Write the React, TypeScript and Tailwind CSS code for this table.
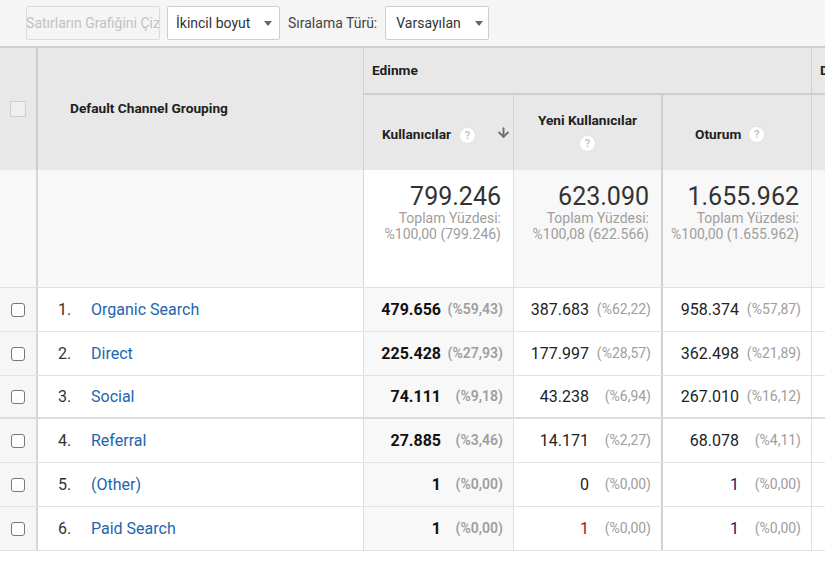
import { ArrowDown } from "lucide-react";

interface Row {
  n: number;
  name: string;
  users: string;
  usersPct: string;
  newUsers: string;
  newUsersPct: string;
  sessions: string;
  sessionsPct: string;
  newColor?: string;
  sessColor?: string;
}

const rows: Row[] = [
  { n: 1, name: "Organic Search", users: "479.656", usersPct: "(%59,43)", newUsers: "387.683", newUsersPct: "(%62,22)", sessions: "958.374", sessionsPct: "(%57,87)" },
  { n: 2, name: "Direct", users: "225.428", usersPct: "(%27,93)", newUsers: "177.997", newUsersPct: "(%28,57)", sessions: "362.498", sessionsPct: "(%21,89)" },
  { n: 3, name: "Social", users: "74.111", usersPct: "(%9,18)", newUsers: "43.238", newUsersPct: "(%6,94)", sessions: "267.010", sessionsPct: "(%16,12)" },
  { n: 4, name: "Referral", users: "27.885", usersPct: "(%3,46)", newUsers: "14.171", newUsersPct: "(%2,27)", sessions: "68.078", sessionsPct: "(%4,11)" },
  { n: 5, name: "(Other)", users: "1", usersPct: "(%0,00)", newUsers: "0", newUsersPct: "(%0,00)", sessions: "1", sessionsPct: "(%0,00)", sessColor: "text-[#0d1a6e]" },
  { n: 6, name: "Paid Search", users: "1", usersPct: "(%0,00)", newUsers: "1", newUsersPct: "(%0,00)", sessions: "1", sessionsPct: "(%0,00)", newColor: "text-[#a31515]", sessColor: "text-[#0d1a6e]" },
];

function Help() {
  return (
    <span className="inline-flex items-center justify-center w-[17px] h-[17px] rounded-full bg-white border border-[#e2e2e2] text-[11px] font-bold text-[#c4c4c4] leading-none">
      ?
    </span>
  );
}

function Caret() {
  return <span className="ml-[14px] w-0 h-0 border-l-[4px] border-r-[4px] border-t-[5px] border-l-transparent border-r-transparent border-t-[#666]" />;
}

function Summary({ value, pct, white }: { value: string; pct: string; white?: boolean }) {
  return (
    <div className={`h-full flex flex-col items-end pt-[14px] pr-[12px] ${white ? "bg-white" : "bg-[#f8f8f8]"}`}>
      <div className="text-[25px] leading-[26px] text-[#333]">{value}</div>
      <div className="text-[14px] leading-[16px] text-[#9e9e9e]">Toplam Yüzdesi:</div>
      <div className="text-[14px] leading-[16px] text-[#9e9e9e]">{pct}</div>
    </div>
  );
}

function Metric({ value, pct, bold, color }: { value: string; pct: string; bold?: boolean; color?: string }) {
  return (
    <div className="flex items-center justify-end h-full pr-[10px]">
      <span className={`text-[16px] ${bold ? "font-bold text-[#111]" : color || "text-[#222]"}`}>{value}</span>
      <span className={`w-[62px] text-right text-[14px] text-[#9e9e9e] ${bold ? "font-semibold" : ""}`}>{pct}</span>
    </div>
  );
}

export default function App() {
  return (
    <div className="w-full min-h-[565px] bg-white overflow-hidden font-['Roboto','Liberation_Sans',sans-serif]">
      {/* toolbar */}
      <div className="h-[46px] bg-[#f5f5f5] flex items-center pl-[26px] gap-[7px] text-[14px]">
        <button className="w-[134px] h-[34px] border border-[#dcdcdc] rounded-[2px] bg-[#f5f5f5] text-[#c2c2c2] whitespace-nowrap overflow-hidden text-[14px] flex items-center justify-center">
          Satırların Grafiğini Çiz
        </button>
        <button className="w-[113px] h-[34px] border border-[#cfcfcf] rounded-[2px] bg-white text-[#333] flex items-center pl-[8px]">
          İkincil boyut
          <Caret />
        </button>
        <span className="text-[#444] ml-[1px] mr-[1px]">Sıralama Türü:</span>
        <button className="w-[104px] h-[34px] border border-[#cfcfcf] rounded-[2px] bg-white text-[#333] flex items-center pl-[10px]">
          Varsayılan
          <Caret />
        </button>
      </div>

      {/* table */}
      <div className="border-t-2 border-[#d0d0d0]">
        {/* header */}
        <div className="flex h-[122px] bg-[#e8e8e8] text-[13.7px] font-bold text-[#212121]">
          <div className="w-[38px] shrink-0 border-r-2 border-[#cdcdcd] flex items-center justify-center">
            <span className="w-[16px] h-[16px] border border-[#cfcfcf] bg-[#efefef]" />
          </div>
          <div className="w-[326px] shrink-0 border-r border-[#d0d0d0] flex items-center pl-[32px] pb-[2px]">
            Default Channel Grouping
          </div>
          <div className="flex-1 min-w-0 flex flex-col">
            <div className="h-[47px] flex border-b-2 border-[#cdcdcd]">
              <div className="w-[448px] shrink-0 border-r border-[#d0d0d0] flex items-center pl-[8px]">Edinme</div>
              <div className="flex-1 min-w-0 flex items-center pl-[8px] whitespace-nowrap overflow-hidden">D</div>
            </div>
            <div className="flex-1 flex">
              <div className="w-[150px] shrink-0 border-r border-[#d6d6d6] flex items-center pl-[18px] pr-[2px] pt-[4px]">
                <span>Kullanıcılar</span>
                <span className="ml-[8px]">
                  <Help />
                </span>
                <ArrowDown size={15} strokeWidth={3} className="ml-auto mb-[4px] text-[#6f6f6f]" />
              </div>
              <div className="w-[149px] shrink-0 border-r-2 border-[#cdcdcd] flex flex-col items-center justify-center gap-[4px] pb-[3px]">
                <span>Yeni Kullanıcılar</span>
                <Help />
              </div>
              <div className="w-[149px] shrink-0 border-r border-[#d0d0d0] flex items-center pl-[32px] gap-[7px] pt-[4px]">
                <span>Oturum</span>
                <Help />
              </div>
              <div className="flex-1" />
            </div>
          </div>
        </div>

        {/* summary */}
        <div className="flex h-[118px] border-b border-[#e0e0e0] bg-[#f8f8f8]">
          <div className="w-[38px] shrink-0 border-r-2 border-[#d6d6d6]" />
          <div className="w-[326px] shrink-0 border-r border-[#d6d6d6]" />
          <div className="w-[150px] shrink-0 border-r border-[#e0e0e0]">
            <Summary value="799.246" pct="%100,00 (799.246)" white />
          </div>
          <div className="w-[149px] shrink-0 border-r-2 border-[#d0d0d0]">
            <Summary value="623.090" pct="%100,08 (622.566)" />
          </div>
          <div className="w-[149px] shrink-0 border-r border-[#e0e0e0]">
            <Summary value="1.655.962" pct="%100,00 (1.655.962)" />
          </div>
          <div className="flex-1" />
        </div>

        {/* rows */}
        {rows.map((r) => (
          <div
            key={r.n}
            className={`flex ${r.n === 3 ? "h-[43px] border-b-2 border-[#dcdcdc]" : "h-[44px] border-b border-[#e3e3e3]"}`}
          >
            <div className="w-[38px] shrink-0 border-r-2 border-[#d6d6d6] bg-[#f6f6f6] flex items-center justify-center">
              <span className="w-[14px] h-[14px] border-[1.5px] border-[#777] rounded-[3px] bg-white" />
            </div>
            <div className="w-[326px] shrink-0 border-r border-[#dcdcdc] flex items-center pl-[20px] text-[16px]">
              <span className="w-[33px] text-[#333]">{r.n}.</span>
              <span className="text-[#2166ac]">{r.name}</span>
            </div>
            <div className="w-[150px] shrink-0 border-r border-[#e0e0e0] bg-[#f8f8f8]">
              <Metric value={r.users} pct={r.usersPct} bold />
            </div>
            <div className="w-[149px] shrink-0 border-r-2 border-[#d0d0d0]">
              <Metric value={r.newUsers} pct={r.newUsersPct} color={r.newColor} />
            </div>
            <div className="w-[149px] shrink-0 border-r border-[#e0e0e0]">
              <Metric value={r.sessions} pct={r.sessionsPct} color={r.sessColor} />
            </div>
            <div className="flex-1" />
          </div>
        ))}
      </div>
    </div>
  );
}
